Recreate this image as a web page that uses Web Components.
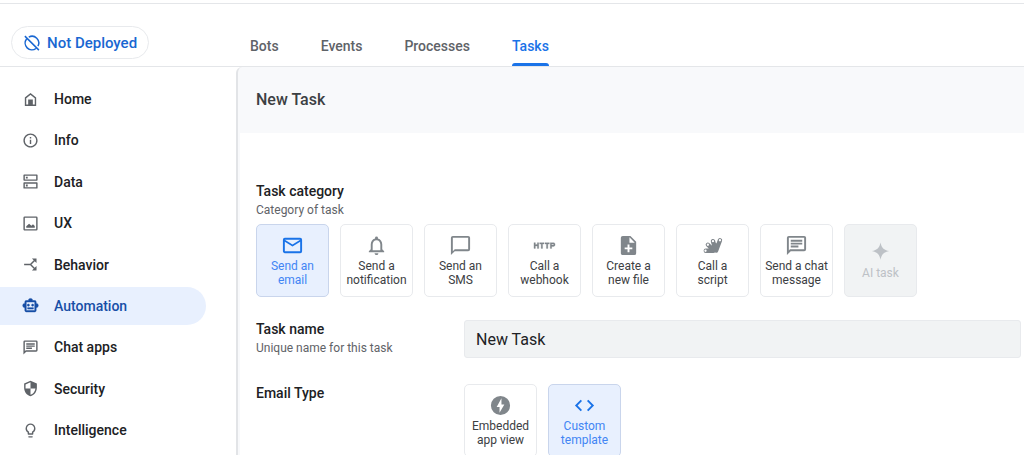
<!DOCTYPE html>
<html lang="en">
<head>
<meta charset="utf-8">
<meta name="viewport" content="width=device-width, initial-scale=1">
<title>Automation - Tasks</title>
<style>
    body {
        margin: 0;
        font-family: Roboto, "Liberation Sans", sans-serif;
        color: #202124;
        background: #fff;
    }
</style>
</head>
<body>
<app-shell>
    <deploy-badge slot="status">Not Deployed</deploy-badge>
    <tab-link slot="tabs">Bots</tab-link>
    <tab-link slot="tabs">Events</tab-link>
    <tab-link slot="tabs">Processes</tab-link>
    <tab-link slot="tabs" selected>Tasks</tab-link>

    <nav-item slot="nav" icon="home">Home</nav-item>
    <nav-item slot="nav" icon="info">Info</nav-item>
    <nav-item slot="nav" icon="data">Data</nav-item>
    <nav-item slot="nav" icon="image">UX</nav-item>
    <nav-item slot="nav" icon="split">Behavior</nav-item>
    <nav-item slot="nav" icon="robot" selected>Automation</nav-item>
    <nav-item slot="nav" icon="chat">Chat apps</nav-item>
    <nav-item slot="nav" icon="shield">Security</nav-item>
    <nav-item slot="nav" icon="bulb">Intelligence</nav-item>

    <task-panel heading="New Task">
        <form-row label="Task category" hint="Category of task" stacked>
            <option-card icon="mail" selected>Send an email</option-card>
            <option-card icon="bell">Send a notification</option-card>
            <option-card icon="sms">Send an SMS</option-card>
            <option-card icon="http">Call a webhook</option-card>
            <option-card icon="file">Create a new file</option-card>
            <option-card icon="script">Call a<br>script</option-card>
            <option-card icon="chat">Send a chat message</option-card>
            <option-card icon="spark" disabled>AI task</option-card>
        </form-row>
        <form-row label="Task name" hint="Unique name for this task">
            <text-field label="Task name" value="New Task"></text-field>
        </form-row>
        <form-row label="Email Type">
            <option-card icon="bolt">Embedded app view</option-card>
            <option-card icon="code" selected>Custom template</option-card>
        </form-row>
    </task-panel>
</app-shell>

<script>
const ICONS = {
    off: '<path d="M7.7 4.1A9 9 0 0 1 19.9 16.3M17.3 19.3A9 9 0 0 1 4.7 6.7M2.5 2.8l18.7 18.7" fill="none" stroke="currentColor" stroke-width="2"/>',
    home: '<path d="M5 9.7 12 4.200l7 5.500V20H5z" fill="none" stroke="currentColor" stroke-width="2"/><path d="M8.700 12h6.600v8H8.700z"/>',
    info: '<path d="M11 7h2v2h-2zm0 4h2v6h-2zm1-9C6.500 2 2 6.500 2 12s4.500 10 10 10 10-4.500 10-10S17.500 2 12 2zm0 18a8 8 0 1 1 0-16 8 8 0 0 1 0 16z"/>',
    data: '<path d="M3 3h18v7H3zM3 14h18v7H3z" fill="none" stroke="currentColor" stroke-width="2" stroke-linejoin="round"/><path d="M5.500 5.300h2.600v2.600H5.500zM5.500 16.300h2.600v2.600H5.500z"/>',
    image: '<path d="M20 4v16H4V4h16m0-2H4a2 2 0 0 0-2 2v16c0 1.100.9 2 2 2h16a2 2 0 0 0 2-2V4a2 2 0 0 0-2-2z"/><path d="M6 18h12v-2.500L15.500 13l-2.200 2-3.300-2.800-4 3.800z"/>',
    split: '<path d="M3 12h9l6-6M12 12l6 6" fill="none" stroke="currentColor" stroke-width="2"/><path d="M14 3.500h6.500V10zM20.500 14v6.500H14z"/>',
    robot: '<path d="M20 9V7a2 2 0 0 0-2-2h-3a3 3 0 0 0-6 0H6a2 2 0 0 0-2 2v2a3 3 0 0 0 0 6v4c0 1.100.9 2 2 2h12a2 2 0 0 0 2-2v-4a3 3 0 0 0 0-6zm-2 10H6V7h12v12zm-9-6a1.500 1.500 0 1 1 0-3 1.500 1.500 0 0 1 0 3zm7.500-1.500a1.500 1.500 0 1 1-3 0 1.500 1.500 0 0 1 3 0zM8 15h8v2H8z" stroke="currentColor" stroke-width=".7"/>',
    chat: '<path d="M4 4h16v12H5.200L4 17.200V4m0-2a2 2 0 0 0-2 2v18l4-4h14a2 2 0 0 0 2-2V4a2 2 0 0 0-2-2H4zm2 10h8v2H6zm0-3h12v2H6zm0-3h12v2H6z"/>',
    shield: '<path d="M12 1 3 5v6c0 5.550 3.840 10.740 9 12 5.160-1.260 9-6.450 9-12V5zm0 11h7c-.53 4.120-3.280 7.790-7 8.940V12H5V6.300l7-3.110z"/>',
    bulb: '<path d="M9 21c0 .6.400 1 1 1h4c.6 0 1-.4 1-1v-1H9zm3-19a7 7 0 0 0-4 12.700V17c0 .6.400 1 1 1h6c.6 0 1-.4 1-1v-2.300A7 7 0 0 0 12 2zm2.900 11.100-.9.600V16h-4v-2.300l-.9-.6a5 5 0 1 1 5.800 0z"/>',
    mail: '<path d="M22 6a2 2 0 0 0-2-2H4a2 2 0 0 0-2 2v12c0 1.100.9 2 2 2h16a2 2 0 0 0 2-2V6zm-2 0-8 5-8-5h16zm0 12H4V8l8 5 8-5v10z"/>',
    bell: '<path d="M12 22a2 2 0 0 0 2-2h-4c0 1.100.9 2 2 2zm6-6v-5c0-3.070-1.630-5.640-4.500-6.320V4a1.500 1.500 0 0 0-3 0v.68C7.640 5.360 6 7.920 6 11v5l-2 2v1h16v-1zm-2 1H8v-6c0-2.480 1.510-4.500 4-4.500s4 2.020 4 4.500z"/>',
    sms: '<path d="M20 2H4a2 2 0 0 0-2 2v18l4-4h14a2 2 0 0 0 2-2V4a2 2 0 0 0-2-2zm0 14H6l-2 2V4h16z"/>',
    http: '<path d="M4.500 11h-2V9H1v6h1.500v-2.500h2V15H6V9H4.500zM7 10.500h1.500V15H10v-4.500h1.500V9H7zm5.500 0H14V15h1.500v-4.500H17V9h-4.500zM21.500 9H18v6h1.500v-2h2c.8 0 1.500-.7 1.500-1.500v-1c0-.8-.7-1.500-1.500-1.500zm0 2.500h-2v-1h2z" stroke="currentColor" stroke-width=".3"/>',
    file: '<path d="M14 2H6a2 2 0 0 0-2 2v16c0 1.100.9 2 2 2h12a2 2 0 0 0 2-2V8zm2 14h-3v3h-2v-3H8v-2h3v-3h2v3h3zm-3-7V3.500L18.500 9z"/>',
    script: '<path d="M5 17.500h8M7.200 11.200l6.300 6M12.500 7.500l2.300 8M19.800 6.500l-4 10.700M16 12l-.5 5" fill="none" stroke="currentColor" stroke-width="4.600" stroke-linecap="round"/><g fill="#fff"><circle cx="4.700" cy="17.500" r="1.200"/><circle cx="7.200" cy="11.200" r="1.200"/><circle cx="12.500" cy="7.500" r="1.200"/><circle cx="19.800" cy="6.500" r="1.200"/></g>',
    spark: '<path d="M12 1.500c1 5.400 3.600 8 9 9-5.400 1-8 3.600-9 9-1-5.400-3.600-8-9-9 5.400-1 8-3.600 9-9z"/>',
    bolt: '<path d="M12 2a10 10 0 1 0 0 20 10 10 0 0 0 0-20zm-1 17.500V13.500H8L13 4.500v6.500h3z"/>',
    code: '<path d="M9.400 16.600 4.800 12l4.600-4.600L8 6l-6 6 6 6zm5.200 0 4.600-4.600-4.600-4.600L16 6l6 6-6 6z"/>'
};

const icon = (name, size) => `<svg viewBox="0 0 24 24" width="${size}" height="${size}" fill="currentColor" aria-hidden="true">${ICONS[name] || ''}</svg>`;

class AppShell extends HTMLElement {
    constructor() {
        super();
        this.attachShadow({ mode: 'open' });
    }

    connectedCallback() {
        this.shadowRoot.innerHTML = `
            <style>
                :host {
                    --side: 236px;
                    display: grid;
                    grid-template: auto 1fr / var(--side) 1fr;
                    height: 100vh;
                    box-sizing: border-box;
                    padding-top: 3px;
                }
                header {
                    grid-column: 1 / -1;
                    display: grid;
                    grid-template-columns: var(--side) 1fr;
                    border-top: 1px solid #e4e6e9;
                    border-bottom: 1px solid #e4e6e9;
                }
                .status {
                    padding: 22px 0 7px 11px;
                }
                .tabs {
                    display: flex;
                    gap: 42px;
                    padding: 0 14px;
                }
                .side {
                    display: flex;
                    flex-direction: column;
                    justify-content: space-between;
                    padding: 13px 30px 6px 0;
                }
                main {
                    min-width: 0;
                    min-height: 0;
                    overflow: auto;
                    scrollbar-width: none;
                }
            </style>
            <header>
                <div class="status"><slot name="status"></slot></div>
                <nav class="tabs" aria-label="Automation"><slot name="tabs"></slot></nav>
            </header>
            <nav class="side" aria-label="App"><slot name="nav"></slot></nav>
            <main><slot></slot></main>
        `;
    }
}

class DeployBadge extends HTMLElement {
    constructor() {
        super();
        this.attachShadow({ mode: 'open' });
    }

    connectedCallback() {
        this.shadowRoot.innerHTML = `
            <style>
                :host {
                    display: block;
                }
                button {
                    display: flex;
                    align-items: center;
                    gap: 6px;
                    height: 33px;
                    padding: 0 11px;
                    border: 1px solid #e8eaed;
                    border-radius: 17px;
                    background: #fff;
                    color: #1967d2;
                    font: 500 15px/20px Roboto, sans-serif;
                    cursor: pointer;
                }
            </style>
            <button type="button">${icon('off', 18)}<slot></slot></button>
        `;
    }
}

class TabLink extends HTMLElement {
    constructor() {
        super();
        this.attachShadow({ mode: 'open' });
    }

    connectedCallback() {
        this.shadowRoot.innerHTML = `
            <style>
                :host {
                    display: flex;
                }
                a {
                    display: flex;
                    flex-direction: column;
                    justify-content: space-between;
                    padding-top: 32px;
                    color: #5f6368;
                    font: 500 14px/20px Roboto, sans-serif;
                    text-decoration: none;
                }
                a::after {
                    content: "";
                    height: 3px;
                    border-radius: 3px 3px 0 0;
                }
                :host([selected]) a {
                    color: #1a73e8;
                }
                :host([selected]) a::after {
                    background: #1a73e8;
                }
            </style>
            <a href="#"><slot></slot></a>
        `;
    }
}

class NavItem extends HTMLElement {
    constructor() {
        super();
        this.attachShadow({ mode: 'open' });
    }

    connectedCallback() {
        this.shadowRoot.innerHTML = `
            <style>
                :host {
                    display: block;
                }
                a {
                    display: flex;
                    align-items: center;
                    gap: 15px;
                    height: 38px;
                    padding-left: 22px;
                    border-radius: 0 19px 19px 0;
                    color: #202124;
                    font: 500 14px/20px Roboto, sans-serif;
                    text-decoration: none;
                }
                svg {
                    color: #5f6368;
                }
                :host([selected]) a {
                    background: #e8f0fe;
                    color: #174ea6;
                }
                :host([selected]) svg {
                    color: #174ea6;
                }
            </style>
            <a href="#">${icon(this.getAttribute('icon'), 17)}<slot></slot></a>
        `;
    }
}

class TaskPanel extends HTMLElement {
    constructor() {
        super();
        this.attachShadow({ mode: 'open' });
    }

    connectedCallback() {
        this.shadowRoot.innerHTML = `
            <style>
                :host {
                    display: block;
                    box-sizing: border-box;
                    min-height: 100%;
                    border-left: 2px solid #e2e4e7;
                    border-top-left-radius: 6px;
                    background: #f8f9fb;
                    padding-left: 2px;
                }
                h1 {
                    margin: 0;
                    padding: 21px 16px;
                    color: #3c4043;
                    font: 500 16px/24px Roboto, sans-serif;
                }
                .body {
                    display: grid;
                    gap: 23px;
                    padding: 49px 3px 24px 16px;
                    background: #fff;
                }
            </style>
            <h1>${this.getAttribute('heading')}</h1>
            <div class="body"><slot></slot></div>
        `;
    }
}

class FormRow extends HTMLElement {
    constructor() {
        super();
        this.attachShadow({ mode: 'open' });
    }

    connectedCallback() {
        const hint = this.getAttribute('hint');
        this.shadowRoot.innerHTML = `
            <style>
                :host {
                    display: grid;
                    grid-template-columns: 208px 1fr;
                }
                :host([stacked]) {
                    grid-template-columns: 1fr;
                }
                h2 {
                    margin: 0;
                    font: 500 14px/18px Roboto, sans-serif;
                }
                p {
                    margin: 0;
                    padding: 1px 0 4px;
                    color: #5f6368;
                    font: 12px/18px Roboto, sans-serif;
                }
                .content {
                    display: flex;
                    flex-wrap: wrap;
                    gap: 11px;
                }
                :host([stacked]) .content {
                    padding-top: 1px;
                }
            </style>
            <div>
                <h2>${this.getAttribute('label')}</h2>
                ${hint ? `<p>${hint}</p>` : ''}
            </div>
            <div class="content"><slot></slot></div>
        `;
    }
}

class OptionCard extends HTMLElement {
    constructor() {
        super();
        this.attachShadow({ mode: 'open' });
    }

    connectedCallback() {
        const disabled = this.hasAttribute('disabled') ? 'disabled' : '';
        this.shadowRoot.innerHTML = `
            <style>
                :host {
                    display: block;
                }
                button {
                    display: flex;
                    flex-direction: column;
                    align-items: center;
                    justify-content: center;
                    gap: 2px;
                    box-sizing: border-box;
                    width: 73px;
                    height: 73px;
                    padding: 0 2px;
                    border: 1px solid #e8eaed;
                    border-radius: 5px;
                    background: #fff;
                    color: #3c4043;
                    font: 12px/14px Roboto, sans-serif;
                    cursor: pointer;
                }
                svg {
                    color: #80868b;
                }
                :host([selected]) button {
                    border-color: #c9d5ec;
                    background: #e8f0fe;
                    color: #4285f4;
                }
                :host([selected]) svg {
                    color: #1a73e8;
                }
                button:disabled {
                    background: #f1f3f4;
                    color: #bdc1c6;
                    cursor: default;
                }
                button:disabled svg {
                    color: #bdc1c6;
                }
            </style>
            <button type="button" ${disabled}>${icon(this.getAttribute('icon'), 23)}<span><slot></slot></span></button>
        `;
    }
}

class TextField extends HTMLElement {
    constructor() {
        super();
        this.attachShadow({ mode: 'open' });
    }

    connectedCallback() {
        this.shadowRoot.innerHTML = `
            <style>
                :host {
                    display: block;
                    flex: 1;
                }
                input {
                    box-sizing: border-box;
                    width: 100%;
                    height: 38px;
                    padding: 0 11px;
                    border: 1px solid #e8eaed;
                    border-radius: 3px;
                    background: #f1f3f4;
                    color: #202124;
                    font: 16px/24px Roboto, sans-serif;
                }
            </style>
            <input type="text" aria-label="${this.getAttribute('label')}" value="${this.getAttribute('value')}">
        `;
    }
}

customElements.define('app-shell', AppShell);
customElements.define('deploy-badge', DeployBadge);
customElements.define('tab-link', TabLink);
customElements.define('nav-item', NavItem);
customElements.define('task-panel', TaskPanel);
customElements.define('form-row', FormRow);
customElements.define('option-card', OptionCard);
customElements.define('text-field', TextField);
</script>
</body>
</html>
